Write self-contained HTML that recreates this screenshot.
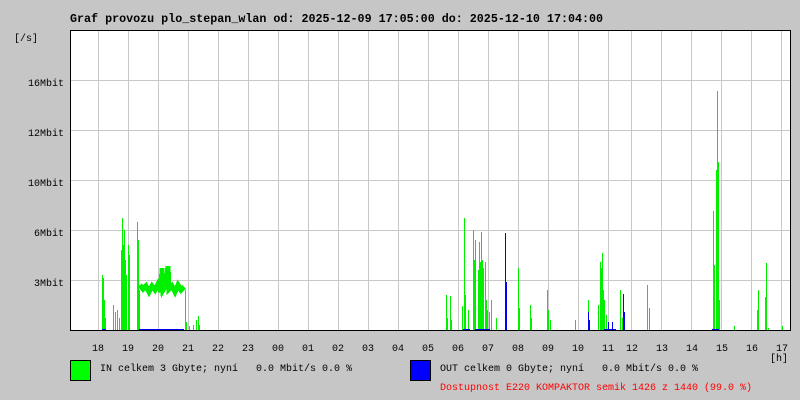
<!DOCTYPE html>
<html><head><meta charset="utf-8"><style>
html,body{margin:0;padding:0;background:#c6c6c6;width:800px;height:400px;overflow:hidden}
svg{display:block}
text{font-family:"Liberation Mono",monospace;font-size:10px;fill:#000}
</style></head><body>
<svg width="800" height="400" xmlns="http://www.w3.org/2000/svg" shape-rendering="crispEdges">
<rect width="800" height="400" fill="#c6c6c6"/>
<text x="70" y="22" font-weight="bold" style="font-size:11.7px">Graf provozu plo_stepan_wlan od: 2025-12-09 17:05:00 do: 2025-12-10 17:04:00</text>
<rect x="70" y="30" width="720" height="300" fill="#fff"/>
<g stroke="#c8c8c8" stroke-width="1">
<path d="M98.5 30V330M128.5 30V330M158.5 30V330M188.5 30V330M218.5 30V330M248.5 30V330M278.5 30V330M308.5 30V330M338.5 30V330M368.5 30V330M398.5 30V330M428.5 30V330M458.5 30V330M488.5 30V330M518.5 30V330M548.5 30V330M578.5 30V330M608.5 30V330M631.5 30V330M661.5 30V330M691.5 30V330M721.5 30V330M751.5 30V330M781.5 30V330"/>
<path d="M70 80.5H790M70 130.5H790M70 180.5H790M70 230.5H790M70 280.5H790"/>
</g>
<g stroke="#00f000" stroke-width="1" fill="none">
<path d="M102.5 330V275M103.5 330V278M104.5 330V300M105.5 330V318M113.5 330V305M115.5 330V312M117.5 330V310M119.5 330V318M121.5 330V250M122.5 330V218M123.5 330V245M124.5 330V230M125.5 330V260M126.5 330V275M128.5 330V245M129.5 330V255M137.5 330V222M138.5 330V240M139.5 330V290"/>
<path d="M140 285 L143 289 146 286 149 292 152 286 155 290 158 284 161 292 162 268 163 290 166 285 168 266 169 289 172 286 175 292 178 285 181 290 184 287" stroke-width="5"/>
<path d="M185.5 330V290M186.5 330V322M189.5 330V326M193.5 330V325M196.5 330V320M198.5 330V316M199.5 330V325"/>
<path d="M446.5 330V295M447.5 330V318M450.5 330V296M451.5 330V320M462.5 330V306M464.5 330V218M465.5 330V295M468.5 330V310M473.5 330V230M474.5 330V260M475.5 330V240M478.5 330V270M479.5 330V242M480.5 330V262M481.5 330V232M482.5 330V260M483.5 330V268M485.5 330V262M486.5 330V300M487.5 330V310M489.5 330V312M491.5 330V300M496.5 330V318M518.5 330V268M519.5 330V308M530.5 330V305M531.5 330V318M547.5 330V290M548.5 330V310M550.5 330V320M575.5 330V320M588.5 330V300M598.5 330V305M600.5 330V262M601.5 330V268M602.5 330V253M603.5 330V290M604.5 330V300M606.5 330V315M620.5 330V290M622.5 330V318M647.5 330V285M649.5 330V308M713.5 330V211M714.5 330V265M716.5 330V170M717.5 330V91M718.5 330V162M719.5 330V300M734.5 330V326M757.5 330V310M758.5 330V290M765.5 330V297M766.5 330V263M768.5 330V328M782.5 330V326"/>
</g>
<g stroke="#0000ff" stroke-width="1" fill="none">
<path d="M102 329.5H106M139 329.5H184M463 329.5H470M475 329.5H490M505.5 330V233M506.5 330V282M588.5 330V312M589.5 330V320M604 329.5H616M608.5 330V322M612.5 330V322M623.5 330V294M624.5 330V312M712 329.5H719"/>
</g>
<path d="M70.5 30.5H790.5V330.5H70.5Z" stroke="#000" stroke-width="1" fill="none"/>
<path d="M70 330.5H791" stroke="#000" stroke-width="1"/>
<g text-anchor="end">
<text x="38" y="41">[/s]</text>
<text x="64" y="86">16Mbit</text>
<text x="64" y="136">12Mbit</text>
<text x="64" y="186">10Mbit</text>
<text x="64" y="236">6Mbit</text>
<text x="64" y="286">3Mbit</text>
</g>
<g text-anchor="middle">
<text x="98" y="351">18</text><text x="128" y="351">19</text><text x="158" y="351">20</text><text x="188" y="351">21</text><text x="218" y="351">22</text><text x="248" y="351">23</text><text x="278" y="351">00</text><text x="308" y="351">01</text><text x="338" y="351">02</text><text x="368" y="351">03</text><text x="398" y="351">04</text><text x="428" y="351">05</text><text x="458" y="351">06</text><text x="488" y="351">07</text><text x="518" y="351">08</text><text x="548" y="351">09</text><text x="578" y="351">10</text><text x="608" y="351">11</text><text x="632" y="351">12</text><text x="662" y="351">13</text><text x="692" y="351">14</text><text x="722" y="351">15</text><text x="752" y="351">16</text><text x="782" y="351">17</text>
<text x="779" y="361">[h]</text>
</g>
<rect x="70.5" y="360.5" width="20" height="20" fill="#00ff00" stroke="#000"/>
<rect x="410.5" y="360.5" width="20" height="20" fill="#0000ff" stroke="#000"/>
<text x="100" y="371" xml:space="preserve">IN celkem 3 Gbyte; nyní   0.0 Mbit/s 0.0 %</text>
<text x="440" y="371" xml:space="preserve">OUT celkem 0 Gbyte; nyní   0.0 Mbit/s 0.0 %</text>
<text x="440" y="390" style="fill:#ff0000">Dostupnost E220 KOMPAKTOR semik 1426 z 1440 (99.0 %)</text>
</svg>
</body></html>
